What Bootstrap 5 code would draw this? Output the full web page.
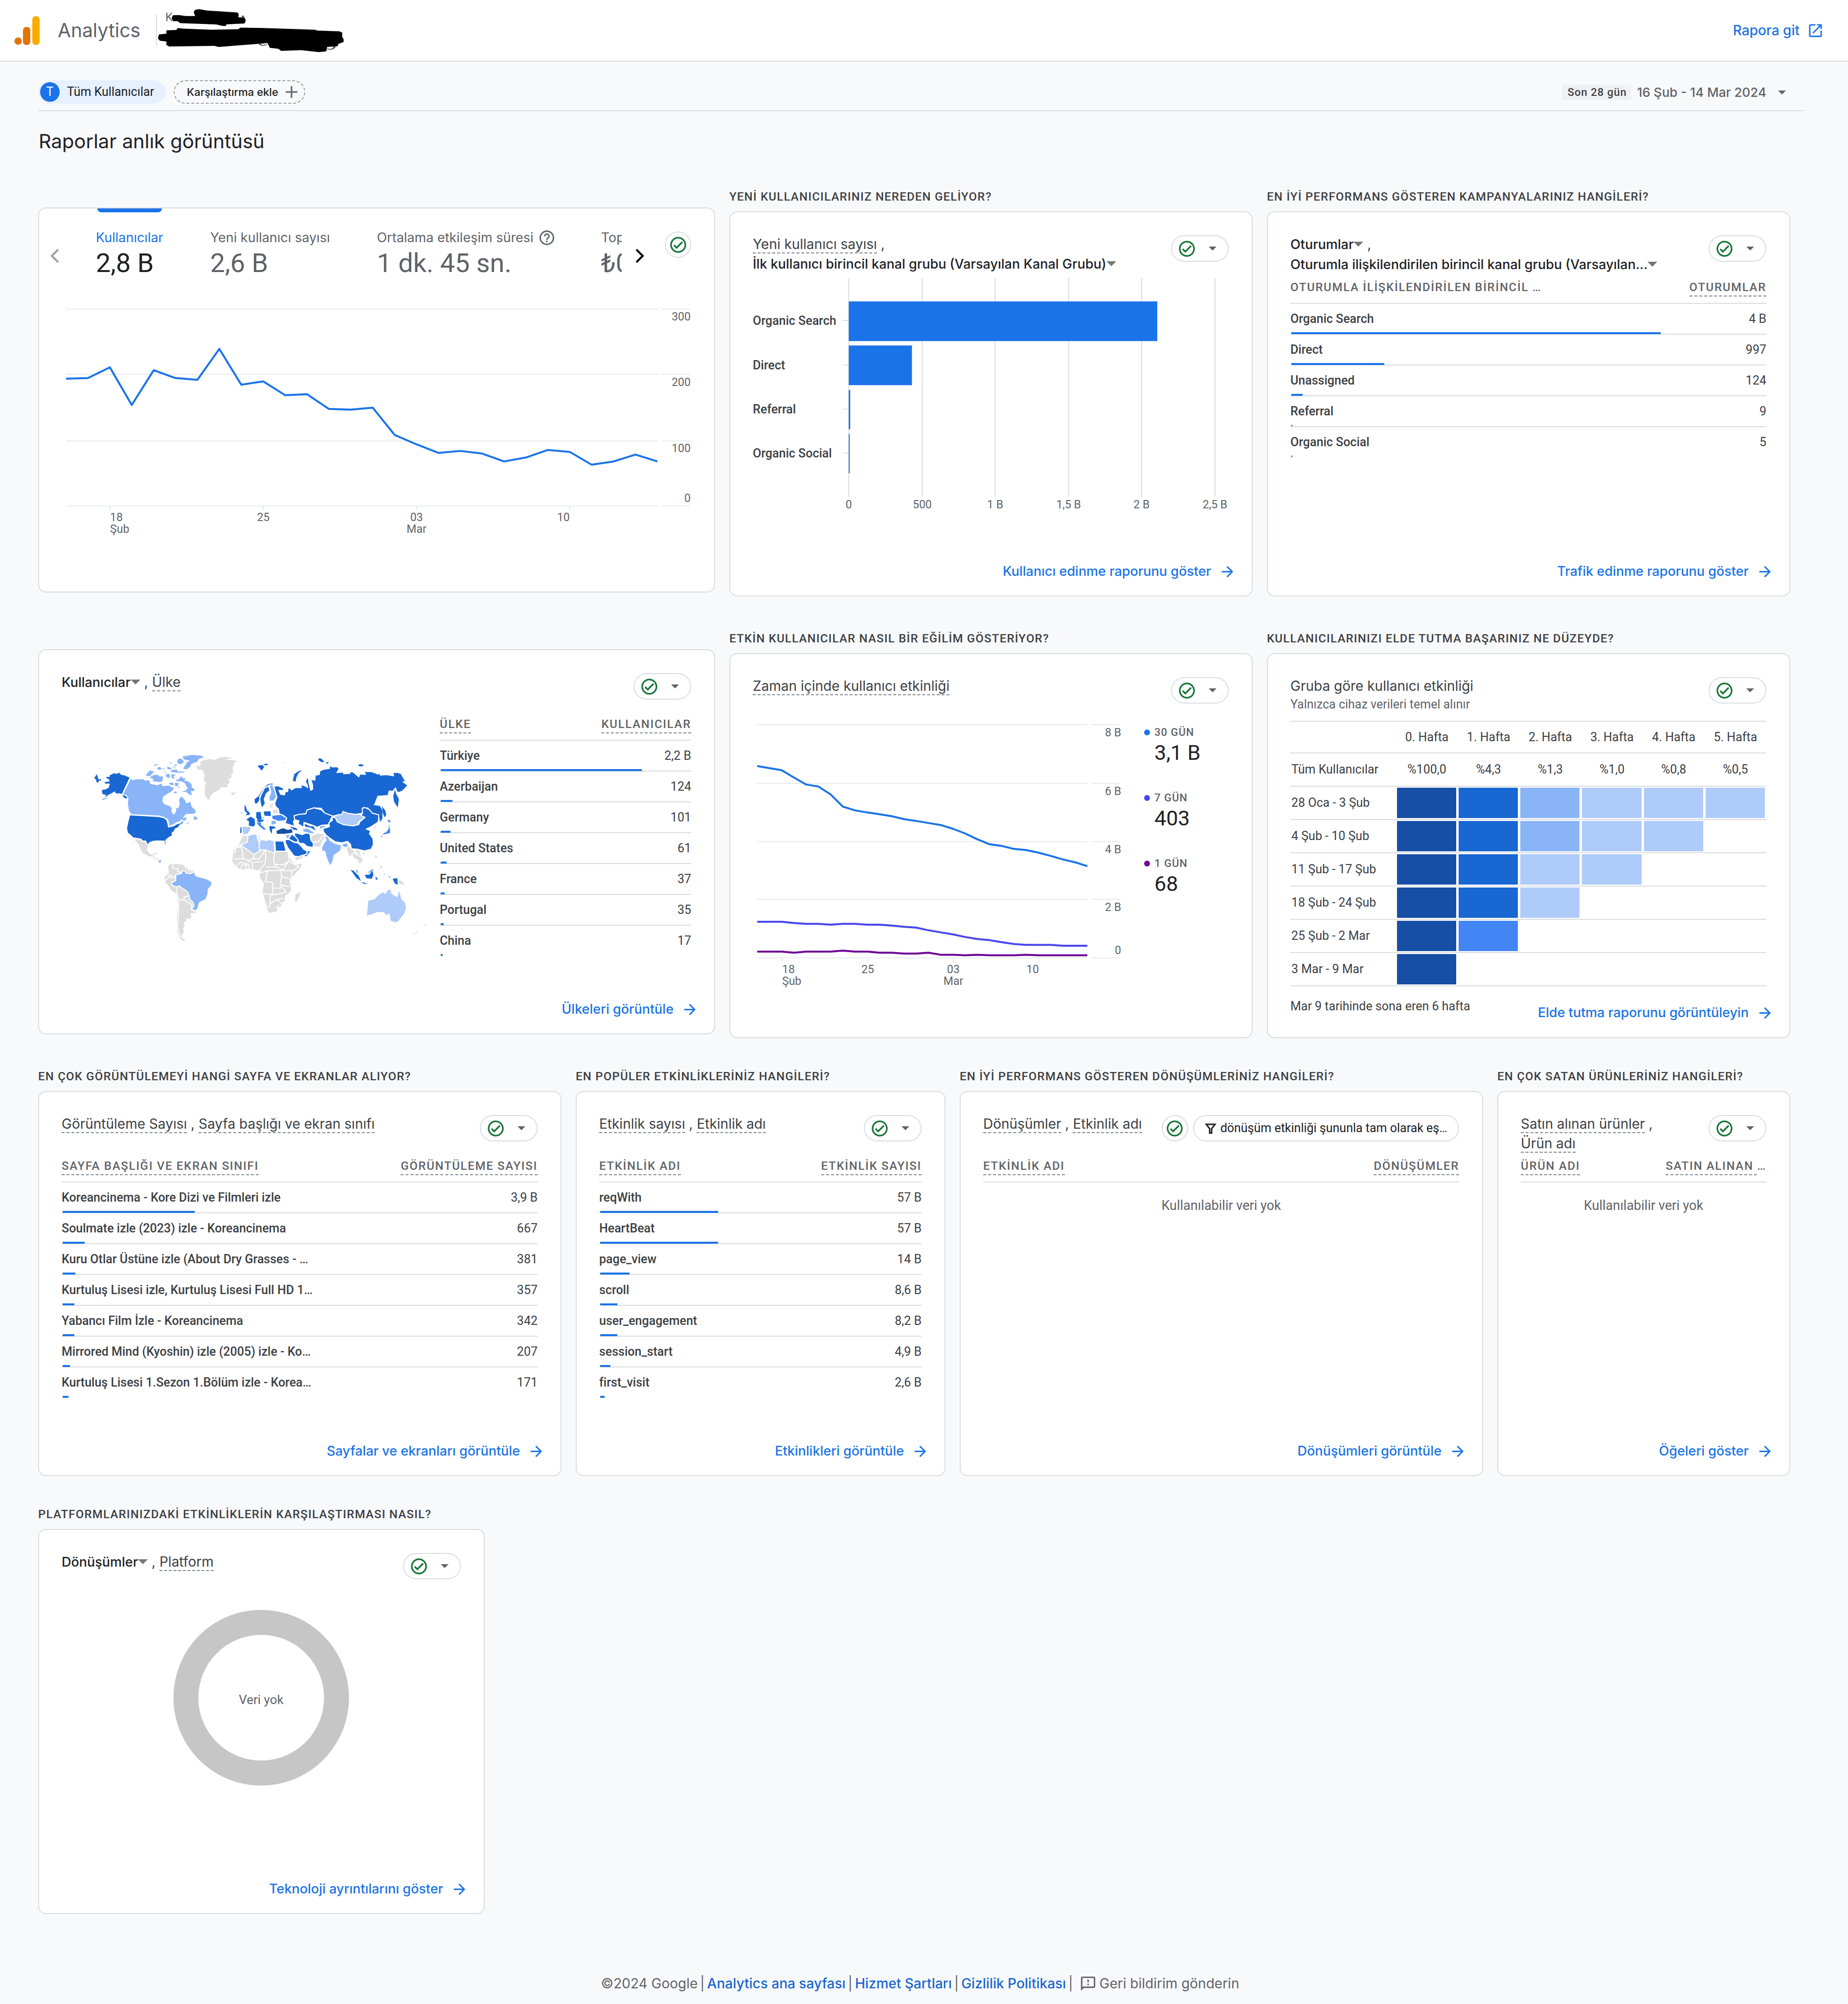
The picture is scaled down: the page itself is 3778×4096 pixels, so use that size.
<!DOCTYPE html>
<html lang="tr">
<head>
<meta charset="utf-8">
<meta name="viewport" content="width=device-width, initial-scale=1">
<title>Analytics | Raporlar anlık görüntüsü</title>
<link href="https://cdn.jsdelivr.net/npm/bootstrap@5.3.0/dist/css/bootstrap.min.css" rel="stylesheet">
<style>
:root{--ink:#202124;--ink2:#3c4043;--muted:#5f6368;--line:#dadce0;--brand:#1a73e8;--ok:#137333}
body{background:#f8f9fb;color:var(--ink2);font-family:Roboto,"Liberation Sans",sans-serif;font-size:25px;line-height:30px}
.gs{font-family:Inter,"Liberation Sans",sans-serif}
a{text-decoration:none;color:var(--brand)}
svg{display:block;flex:none}
.ic{width:39px;height:39px;fill:currentColor}
.ic-sm{width:35px;height:35px;fill:currentColor}
.caret{width:16px;height:8px;fill:var(--muted)}

.topbar{background:#fff;border-bottom:2px solid var(--line);height:126px;padding:0 49px 0 28px}
.topbar .product{font-size:39px;line-height:48px;color:var(--muted);margin-left:36px}
.topbar .rule{width:2px;height:64px;background:var(--line);margin-left:32px}
.topbar .open{font-size:28px;font-weight:500;gap:15px}

.filters{margin:0 91px 0 79px;padding:38px 0 13px;border-bottom:2px solid var(--line)}
.pill{height:48px;border-radius:24px;border:0;color:var(--ink);font-size:25px;line-height:30px;padding:0}
.pill-all{background:#e6f0ff;padding:0 24px 0 3px;gap:15px}
.pill-all .mono{width:40px;height:40px;border-radius:50%;background:var(--brand);color:#fff}
.pill-add{border:2px dashed #9aa0a6;background:none;padding:0 14px 0 25px;gap:15px;font-size:22px;font-weight:500}
.range{border:0;background:none;color:var(--muted);font-size:26px;font-weight:500;padding:2px 36px 0 0}
.range .span-tag{font-family:Roboto,sans-serif;background:#f0f1f3;color:var(--ink2);font-size:22px;line-height:32px;letter-spacing:1px;padding:0 9px 0 12px;margin-right:12px}
.page-title{font-size:40px;line-height:48px;font-weight:400;color:var(--ink);margin:38px 0 74px 79px}

.board{display:grid;grid-template-columns:repeat(23,1fr);column-gap:29px;row-gap:0;padding:0 118px 0 78px;margin-bottom:63px;align-items:start}
.u4{grid-column:span 4}.u5{grid-column:span 5}.u6{grid-column:span 6}.u7{grid-column:span 7}.u9{grid-column:span 9}
.q{font-size:24px;line-height:30px;font-weight:500;letter-spacing:.05em;color:var(--ink2);margin:0 0 15px;white-space:nowrap}
.no-q{padding-top:37px}
.tile{border:2px solid var(--line);border-radius:16px;min-height:787px;padding:45px 47px 29px 46px;color:var(--ink2)}
.tile-head{min-height:80px}
.tile-title{font-size:28px;line-height:40px;font-weight:400;margin:0;color:var(--ink2)}
.tile-title span{white-space:nowrap}
.dash{border-bottom:2px dashed #80868b}
.pick{font-size:27px;font-weight:500;color:var(--ink);white-space:nowrap}
.pick svg{display:inline-block;width:20px;height:10px;fill:#757575;vertical-align:5px}
.chip{height:54px;border:2px solid var(--line);border-radius:27px;background:#fff;padding:0 11px;gap:13px;color:var(--ok);flex:none;margin-top:2px}
.chip-dot{width:54px;padding:0;color:var(--ok)}
.chip .caret{margin:0 12px 0 12px}
.chip-filter{color:var(--ink);font-size:25px;padding:0 22px 0 22px;gap:8px}
.tile-link{font-size:27px;line-height:40px;font-weight:500;gap:16px;margin:auto -15px 0 auto}

.rank{width:100%;margin:0;border-collapse:collapse}
.rank th,.rank td{padding:0;white-space:nowrap}
.rank thead th{height:59px;padding:10px 0 17px;font-size:24px;line-height:30px;font-weight:500;letter-spacing:.07em;color:var(--muted);border-bottom:2px solid var(--line)}
.rank thead .dash{padding-bottom:3px}
.rank tr{position:relative}
.rank tbody tr>*{height:63px;border-bottom:2px solid var(--line)}
.rank tbody tr:last-child>*{border-bottom-color:transparent}
.rank tbody th{font-weight:500}
.rank td,.rank th:last-child{text-align:right}
.rank .fill{position:absolute;left:2px;bottom:0;height:4px;min-width:2px;background:var(--brand)}
.nodata{font-size:27px;line-height:40px;color:var(--muted);text-align:center;padding-top:27px}

.metric-bar{margin:0 0 44px -34px}
.nav-btn{width:40px;height:52px;border:0;background:none;padding:0;margin-top:26px}
.metrics{gap:96px;overflow:hidden;margin:-45px 0 0 64px;padding-top:45px}
.metric{position:relative;border:0;background:none;padding:0;text-align:left;white-space:nowrap;color:var(--muted);flex:none}
.metric .name{font-size:27px;line-height:30px;gap:12px}
.metric .num{font-family:Roboto,sans-serif;font-size:54px;line-height:74px}
.metric.on .name{color:var(--brand)}
.metric.on .num{color:var(--ink)}
.metric.on::before{content:"";position:absolute;left:3px;right:3px;top:-45px;height:8px;background:var(--brand);border-radius:0 0 8px 8px}
.plot text{font-family:Roboto,sans-serif;font-size:23px;fill:var(--muted)}
.plot .cat{font-size:25px;font-weight:500;fill:var(--ink2)}
.plot .g{stroke:#e8eaed;stroke-width:2}
.plot .gv{stroke:var(--line);stroke-width:2}
.plot polyline{fill:none;stroke-width:4;stroke-linejoin:round}
.donut{margin-top:38px}
.plot .hole{font-size:26px}
.legend{gap:60px;padding:20px 0 0;margin-left:40px}
.legend .key{font-size:22px;line-height:30px;font-weight:500;letter-spacing:1px;color:var(--muted);gap:9px}
.legend .key i{width:12px;height:12px;border-radius:50%}
.legend .val{font-size:43px;line-height:44px;padding:4px 0 0 21px;margin-bottom:-4px;color:var(--ink)}
.d30{background:#1a73e8}.d7{background:#4a47eb}.d1{background:#6f0796}

.sub{line-height:35px;color:var(--muted)}
.cohort{table-layout:fixed;width:100%;border-collapse:collapse;margin-top:16px;border-top:2px solid var(--line)}
.cohort th,.cohort td{padding:0;font-weight:400;text-align:center;border-bottom:2px solid var(--line)}
.cohort th:first-child{width:216px;text-align:left;padding-left:2px;white-space:nowrap}
.cohort thead tr{height:65px}
.cohort tbody tr{height:68px}
.cohort .cell{height:62px;margin:2px 3px 2px 2px}
.cohort-foot{margin-top:26px}
.c1{background:#174ea6}.c2{background:#1967d2}.c3{background:#4285f4}.c4{background:#8ab4f8}.c5{background:#aecbfa}

.map-box{padding-top:64px}
.map-list{width:514px}
.map path{stroke:#fff;stroke-width:2;vector-effect:non-scaling-stroke;stroke-linejoin:round}
.map .thin path{stroke-width:0}
.map .edge path{fill:none}
.foot{font-size:28px;line-height:36px;color:var(--muted);padding:61px 16px 22px 0;gap:5px}
.foot a{color:#1967d2;font-weight:500}
.foot a.fb{color:var(--muted);font-weight:400;gap:6px}
</style>
<script src="https://cdn.jsdelivr.net/npm/bootstrap@5.3.0/dist/js/bootstrap.bundle.min.js"></script>
</head>
<body>
<svg width="0" height="0" class="position-absolute" aria-hidden="true">
  <symbol id="check" viewBox="0 0 24 24"><path d="M12 2C6.480 2 2 6.480 2 12s4.480 10 10 10 10-4.480 10-10S17.520 2 12 2zm0 18c-4.410 0-8-3.590-8-8s3.590-8 8-8 8 3.590 8 8-3.590 8-8 8zm4.590-12.420L10 14.170l-2.590-2.580L6 13l4 4 8-8z"/></symbol>
  <symbol id="down" viewBox="0 0 10 5" preserveAspectRatio="none"><path d="M0 0h10L5 5z"/></symbol>
  <symbol id="arrow" viewBox="0 0 24 24"><path d="M12 4l-1.410 1.410L16.170 11H4v2h12.170l-5.580 5.590L12 20l8-8z"/></symbol>
</svg>

<header class="topbar d-flex align-items-center">
  <svg width="54" height="60" viewBox="0 0 54 60" aria-hidden="true"><circle cx="9" cy="52" r="7.500" fill="#e37400"/><rect x="19" y="23" width="15" height="37" rx="7" fill="#e37400"/><rect x="38" y="1" width="15" height="59" rx="7" fill="#f9ab00"/></svg>
  <span class="product gs">Analytics</span>
  <span class="rule"></span>
  <svg width="389" height="92" viewBox="0 0 389 92" role="img" aria-label="Gizlenmiş hesap adı">
    <text x="17" y="27" font-size="24" fill="#5f6368">K</text>
    <g transform="scale(.9609 .4004) translate(-334 -40)">
      <path d="M552 224q4 12 16 4M712 236q-2 20-16 14M516 80l2 14" fill="none" stroke="#5f6368" stroke-width="5"/>
      <path d="M412 62L415 50 424 47 440 54 505 64 508 72 507 88 520 90 523 104 520 120 482 124 480 133 472 132 460 125 383 118 378 108 368 108 365 92 368 78 380 77 395 82 415 82Z"/>
      <path d="M354 155L375 153 378 143 390 146 450 152 506 149 512 141 560 143 670 152 675 156 722 160 728 166 728 188 731 200 731 214 720 224 718 236 696 240 694 262 678 266 640 256 598 260 592 249 574 244 569 220 465 240 456 234 360 237 354 230 354 212 340 208 336 196 338 176 354 172Z"/>
    </g>
  </svg>
  <a href="#" class="open gs d-flex align-items-center ms-auto">Rapora git
    <svg class="ic-sm" viewBox="0 0 24 24"><path d="M19 19H5V5h7V3H5a2 2 0 0 0-2 2v14a2 2 0 0 0 2 2h14c1.100 0 2-.9 2-2v-7h-2v7zM14 3v2h3.590l-9.830 9.830 1.410 1.410L19 6.410V10h2V3h-7z"/></svg></a>
</header>

<main>
<div class="filters d-flex align-items-center">
  <button class="pill pill-all d-flex align-items-center"><span class="mono d-flex align-items-center justify-content-center">T</span>Tüm Kullanıcılar</button>
  <button class="pill pill-add gs d-flex align-items-center ms-3">Karşılaştırma ekle<svg width="24" height="24" viewBox="0 0 24 24" fill="none" stroke="#5f6368" stroke-width="3"><path d="M12 0v24M0 12h24"/></svg></button>
  <button class="range gs d-flex align-items-center ms-auto"><span class="span-tag">Son 28 gün</span>16 Şub - 14 Mar 2024<svg class="caret ms-4"><use href="#down"/></svg></button>
</div>
<h1 class="page-title gs">Raporlar anlık görüntüsü</h1>

<div class="board mb-0 pb-0">
  <section class="u9 no-q">
    <div class="card tile">
      <div class="metric-bar d-flex">
        <button class="nav-btn" aria-label="Önceki"><svg width="40" height="52" viewBox="0 0 40 52" fill="none" stroke="#9aa0a6" stroke-width="4"><path d="M27 13L14 26l13 13"/></svg></button>
        <div class="metrics gs d-flex flex-grow-1">
          <button class="metric on"><span class="name d-flex">Kullanıcılar</span><span class="num d-block">2,8 B</span></button>
          <button class="metric"><span class="name d-flex">Yeni kullanıcı sayısı</span><span class="num d-block">2,6 B</span></button>
          <button class="metric"><span class="name d-flex align-items-center">Ortalama etkileşim süresi<svg width="30" height="30" viewBox="2 2 20 20" fill="#5f6368"><path d="M11 18h2v-2h-2v2zm1-16a10 10 0 1 0 0 20 10 10 0 0 0 0-20zm0 18a8 8 0 1 1 0-16 8 8 0 0 1 0 16zm0-14a4 4 0 0 0-4 4h2a2 2 0 1 1 4 0c0 2-3 1.750-3 5h2c0-2.250 3-2.500 3-5a4 4 0 0 0-4-4z"/></svg></span><span class="num d-block">1 dk. 45 sn.</span></button>
          <button class="metric"><span class="name d-flex">Toplam gelir</span><span class="num d-block">₺0,00</span></button>
        </div>
        <button class="nav-btn ms-3 me-4" aria-label="Sonraki"><svg width="40" height="52" viewBox="0 0 40 52" fill="none" stroke="#000" stroke-width="4"><path d="M14 13l13 13-13 13"/></svg></button>
        <button class="chip chip-dot d-flex align-items-center justify-content-center ms-2" aria-label="Veri kalitesi"><svg class="ic"><use href="#check"/></svg></button>
      </div>
      <svg class="plot" id="users" width="100%" viewBox="0 0 1286 490">
        <path class="g" d="M9 13H1217M1225 13H1284M9 146H1217M1225 146H1284M9 282H1217M1225 282H1284M9 415H1217M1225 415H1284M99 415v10M412 415v10M725 415v10M1038 415v10"/>
        <g text-anchor="end"><text x="1285" y="36">300</text><text x="1285" y="170">200</text><text x="1285" y="305">100</text><text x="1285" y="407">0</text><text x="1038" y="446">10</text></g>
        <text x="99" y="446">18</text><text x="99" y="470">Şub</text>
        <g text-anchor="middle"><text x="412" y="446">25</text><text x="725" y="446">03</text><text x="725" y="470">Mar</text></g>
      </svg>
    </div>
  </section>

  <section class="u7">
    <h2 class="q">YENİ KULLANICILARINIZ NEREDEN GELİYOR?</h2>
    <div class="card tile">
      <div class="tile-head d-flex justify-content-between align-items-start">
        <h3 class="tile-title gs"><span class="dash">Yeni kullanıcı sayısı</span> , <span class="pick">İlk kullanıcı birincil kanal grubu (Varsayılan Kanal Grubu)<svg><use href="#down"/></svg></span></h3>
        <button class="chip d-flex align-items-center" aria-label="Veri kalitesi"><svg class="ic"><use href="#check"/></svg><svg class="caret"><use href="#down"/></svg></button>
      </div>
      <svg class="plot" width="100%" viewBox="0 0 972 490">
        <path class="gv" d="M196 8V455M346 8V455M495 8V455M645 8V455M794 8V455M944 8V455M184 95h12M184 186h12M184 276h12M184 366h12"/>
        <g fill="#1a73e8"><rect x="196" y="56" width="630" height="81"/><rect x="196" y="146" width="129" height="81"/><rect x="196" y="237" width="3" height="80"/><rect x="196" y="327" width="2" height="80"/></g>
        <text class="cat" x="0" y="104">Organic Search</text><text class="cat" x="0" y="195">Direct</text><text class="cat" x="0" y="285">Referral</text><text class="cat" x="0" y="375">Organic Social</text>
        <g text-anchor="middle"><text x="196" y="479">0</text><text x="346" y="479">500</text><text x="495" y="479">1 B</text><text x="645" y="479">1,5 B</text><text x="794" y="479">2 B</text><text x="944" y="479">2,5 B</text></g>
      </svg>
      <a href="#" class="tile-link gs d-flex align-items-center">Kullanıcı edinme raporunu göster<svg class="ic-sm"><use href="#arrow"/></svg></a>
    </div>
  </section>

  <section class="u7">
    <h2 class="q">EN İYİ PERFORMANS GÖSTEREN KAMPANYALARINIZ HANGİLERİ?</h2>
    <div class="card tile">
      <div class="tile-head d-flex justify-content-between align-items-start">
        <h3 class="tile-title gs"><span class="pick">Oturumlar<svg><use href="#down"/></svg></span> ,<br><span class="pick">Oturumla ilişkilendirilen birincil kanal grubu (Varsayılan...<svg><use href="#down"/></svg></span></h3>
        <button class="chip d-flex align-items-center" aria-label="Veri kalitesi"><svg class="ic"><use href="#check"/></svg><svg class="caret"><use href="#down"/></svg></button>
      </div>
      <table class="rank">
        <thead><tr><th>OTURUMLA İLİŞKİLENDİRİLEN BİRİNCİL …</th><th><span class="dash">OTURUMLAR</span></th></tr></thead>
        <tbody>
          <tr><th>Organic Search<i class="fill" style="width:77.6%"></i></th><td>4 B</td></tr>
          <tr><th>Direct<i class="fill" style="width:19.5%"></i></th><td>997</td></tr>
          <tr><th>Unassigned<i class="fill" style="width:2.4%"></i></th><td>124</td></tr>
          <tr><th>Referral<i class="fill" style="width:.2%"></i></th><td>9</td></tr>
          <tr><th>Organic Social<i class="fill" style="width:.2%"></i></th><td>5</td></tr>
        </tbody>
      </table>
      <a href="#" class="tile-link gs d-flex align-items-center">Trafik edinme raporunu göster<svg class="ic-sm"><use href="#arrow"/></svg></a>
    </div>
  </section>
</div>

<div class="board" style="margin-top:71px">
  <section class="u9 no-q">
    <div class="card tile">
      <div class="tile-head d-flex justify-content-between align-items-start">
        <h3 class="tile-title gs"><span class="pick">Kullanıcılar<svg><use href="#down"/></svg></span> , <span class="dash">Ülke</span></h3>
        <button class="chip d-flex align-items-center" aria-label="Veri kalitesi"><svg class="ic"><use href="#check"/></svg><svg class="caret"><use href="#down"/></svg></button>
      </div>
      <div class="row g-0 flex-nowrap">
        <div class="col ps-5 map-box">
          <svg class="map" width="722" height="452" viewBox="0 0 1568 1568" preserveAspectRatio="none" role="img" aria-label="Ülkelere göre kullanıcılar">
            <g fill="#ddd">
              <path d="M488 165L508 160 512 148 505 135 530 118 555 112 575 120 585 112 600 100 625 97 650 103 655 113 630 118 665 122 685 130 665 142 662 165 657 180 660 198 657 215 650 235 655 248 640 260 645 285 632 300 636 318 605 320 595 338 572 355 558 380 552 412 540 400 530 370 527 345 532 320 527 300 538 290 530 280 525 262 528 235 523 205 515 195 486 195 498 185Z"/>
              <path d="M638 350L650 353 668 346 672 360 655 376 642 368 648 360Z"/>
              <path d="M216 680L246 684 255 698 268 700 280 730 276 760 288 785 300 790 312 777 325 774 318 790 305 800 290 812 275 802 255 785 243 755 236 725 222 700Z"/>
              <path d="M203 676L213 705 222 738 212 724 205 700Z"/>
              <path d="M295 808L306 800 312 815 330 820 342 822 322 832 308 826Z"/>
              <path d="M365 875L378 858 400 855 438 862 444 880 455 892 482 902 490 930 560 985 545 1060 540 1105 510 1130 500 1185 490 1212 470 1212 474 1230 470 1250 450 1252 452 1270 440 1275 444 1300 436 1320 442 1345 432 1360 440 1385 448 1416 430 1405 415 1380 408 1340 405 1250 410 1150 406 1075 385 1055 370 1020 352 985 350 960 355 935 370 920 368 900Z"/>
              <path d="M700 655L722 655 765 648 775 655 778 690 800 690 815 690 840 695 885 700 893 770 902 775 915 830 935 862 965 852 958 890 935 930 920 955 910 985 916 1020 914 1060 890 1085 888 1120 875 1140 868 1170 850 1200 815 1212 806 1175 795 1110 785 1060 792 1000 775 960 772 930 778 908 765 905 745 905 730 895 715 900 690 902 668 880 650 840 655 800 655 765 680 730 685 705Z"/>
              <path d="M960 1042L956 1080 940 1134 930 1130 932 1070 946 1065Z"/>
              <path d="M930 812L970 797 968 815 935 840Z"/>
              <path d="M1003 660L1030 640 1065 645 1070 665 1050 710 1045 740 1015 738 1012 715 1002 700Z"/>
              <path d="M1158 745L1168 718 1182 752 1195 765 1218 758 1222 790 1235 820 1232 850 1215 862 1210 832 1195 825 1185 795 1175 812 1165 780Z"/>
              <path d="M1090 698L1130 716 1128 728 1092 712ZM1134 735L1146 738 1144 765 1136 755ZM1104 872L1110 880 1106 890Z"/>
              <path d="M1282 590L1292 578 1290 612 1302 628 1300 648 1292 622 1280 608Z"/>
              <path d="M1392 968L1410 980 1424 1022 1406 1005 1392 1006Z"/>
              <path d="M1508 1278L1516 1290 1500 1316 1486 1330 1475 1348 1455 1370 1449 1362 1480 1328 1500 1306Z"/>
              <path d="M832 475L855 468 860 502 832 505ZM822 428L840 430 838 462 818 464ZM798 550L820 544 816 562 802 560Z"/>
            </g>
            <g fill="#8ab4f8">
              <path d="M203 248L210 262 232 254 240 258 256 254 268 265 285 262 292 290 322 298 340 284 345 304 372 300 385 312 398 316 388 345 362 370 348 385 345 412 352 432 378 448 386 462 386 490 393 506 401 490 402 464 414 458 418 430 414 408 422 380 436 384 440 398 446 408 450 426 462 420 466 412 472 430 474 450 486 468 494 486 492 500 478 508 450 508 437 530 454 524 450 548 438 562 430 546 420 560 405 568 392 582 370 596 372 576 366 545 350 530 328 520 205 510 192 480 188 430 190 395 184 376 166 368Z"/>
              <path d="M403 935L418 932 430 925 428 912 445 908 447 925 470 928 485 916 492 945 518 955 545 968 562 985 562 1010 547 1040 545 1075 536 1112 508 1132 502 1170 490 1196 472 1175 484 1158 478 1130 465 1110 460 1070 448 1048 430 1032 420 1015 405 1022 388 1012 384 992 402 978Z"/>
              <path d="M1062 660L1080 665 1085 690 1110 715 1138 725 1152 712 1165 710 1168 735 1155 745 1138 730 1134 765 1105 800 1100 840 1090 874 1080 850 1068 800 1065 770 1052 772 1050 745 1060 710 1070 690Z"/>
              <path d="M818 305L832 295 845 350 850 385 838 412 820 416 815 390 825 350Z"/>
              <path d="M890 652L912 650 905 672 895 685ZM965 612L985 604 1015 632 1020 648 1000 645 968 632ZM1040 588L1080 586 1060 605 1040 614ZM825 552L845 548 852 576 826 586ZM780 520L803 528 790 542Z"/>
            </g>
            <g class="thin" fill="#8ab4f8">
              <path d="M433 97L475 87 515 92 528 102 505 115 498 134 470 152 468 168 450 190 436 184 442 165 450 150 448 142 465 128 438 118Z"/>
              <path d="M412 118L422 110 434 122 438 140 428 152 414 150 408 138Z"/>
              <path d="M270 228L288 196 308 206 300 215 290 235 275 238ZM285 248L305 228 325 228 330 240 345 238 345 262 340 278 310 276 298 268 305 258Z"/>
              <path d="M385 194L408 190 410 204 440 205 440 212 410 213 378 206ZM302 166L310 154 325 150 318 160ZM318 182L330 170 342 186 330 193ZM364 170L380 176 385 190 366 188ZM345 180L352 178 350 192ZM374 135L385 142 382 150ZM392 158L408 152 404 164ZM388 168L402 170 398 178Z"/>
              <path d="M360 222L376 222 376 245 370 252 358 238ZM383 222L402 226 392 240 400 256 384 250ZM350 210L360 206 355 216ZM372 286L388 282 396 300 380 300Z"/>
              <path d="M402 258L412 264 428 236 432 250 446 252 440 268 458 276 472 292 474 316 488 336 478 344 470 340 474 372 462 368 448 348 426 350 444 340 456 325 448 304 440 282 420 272 408 275ZM398 284L416 286 412 306 400 310ZM392 350L404 345 408 360 398 358ZM412 312L420 310 414 325Z"/>
              <path d="M480 545L486 518 498 532 498 546ZM444 576L458 566 468 558 456 574ZM324 840L338 828 334 854ZM1290 795L1295 818 1289 812ZM1312 872L1318 880 1314 892ZM1202 898L1210 904 1213 924 1206 920ZM1254 920L1276 894 1280 906 1266 922Z"/>
            </g>
            <g fill="#1967d2">
              <path d="M200 246L164 368 150 362 138 366 131 350 118 362 105 372 92 390 86 383 92 374 76 368 72 345 76 330 90 328 102 318 108 294 86 292 84 276 106 272 104 262 88 248 96 238 107 239 106 230 130 212 138 218 153 209 160 224 178 230Z"/>
              <path d="M198 512L328 524 350 532 362 545 368 575 370 598 392 590 408 575 425 568 430 552 437 560 433 575 420 585 415 600 400 612 395 630 386 640 388 658 370 675 358 692 360 740 352 715 352 698 340 697 320 696 300 700 285 710 280 730 268 697 255 697 248 684 212 674 200 655 188 640 184 608 190 560Z"/>
              <path d="M838 308L858 306 880 322 882 338 860 338 868 365 885 370 888 350 900 345 900 325 912 320 915 335 935 318 960 318 958 298 975 305 988 318 985 295 978 278 985 248 992 255 994 290 1002 338 1010 330 1010 300 1002 260 1020 265 1022 232 1040 225 1042 200 1060 188 1085 182 1085 160 1098 172 1120 170 1128 185 1118 212 1145 208 1148 220 1175 218 1178 205 1190 208 1215 242 1220 222 1245 225 1238 205 1272 205 1300 222 1315 215 1310 230 1340 226 1370 235 1366 212 1385 210 1402 218 1423 275 1412 278 1433 302 1410 342 1395 352 1385 350 1378 320 1366 345 1350 342 1345 375 1300 380 1285 440 1310 445 1322 480 1322 540 1308 570 1302 512 1275 500 1255 464 1234 460 1230 500 1200 508 1165 500 1145 488 1140 508 1100 520 1065 500 1048 465 1015 462 985 478 980 503 950 508 928 518 930 545 925 560 930 592 905 580 888 572 895 535 880 515 862 505 858 470 845 450 842 430 852 385 845 350Z"/>
              <path d="M928 518L950 508 980 505 985 478 1015 462 1048 475 1065 500 1098 520 1090 545 1080 582 1050 585 1030 600 1010 585 972 565 970 600 945 575 950 555 930 545Z"/>
              <path d="M972 568L1000 590 1015 590 1030 632 1000 605 975 598Z"/>
              <path d="M1055 610L1085 595 1082 570 1098 550 1096 530 1110 530 1120 560 1145 580 1190 590 1215 580 1220 560 1243 530 1222 515 1232 500 1230 468 1242 460 1262 475 1275 500 1304 512 1302 560 1285 580 1265 600 1248 612 1268 626 1262 645 1278 680 1280 720 1270 755 1240 767 1210 755 1182 752 1178 720 1165 700 1140 710 1110 702 1085 675 1070 655 1060 635Z"/>
              <path d="M750 400L770 375 790 320 810 292 830 285 842 298 820 300 797 320 780 375 772 420 760 438 752 430ZM795 322L815 308 820 340 805 360 795 400 800 430 785 467 778 430 775 385Z"/>
              <path d="M712 545L735 520 755 540 757 580 750 598 725 592 725 560ZM758 490L780 486 787 545 768 556 757 530ZM790 485L825 482 827 525 795 520Z"/>
              <path d="M843 696L882 698 892 769 845 769ZM888 688L905 686 925 705 945 712 960 735 970 755 985 768 985 790 960 800 948 808 928 804 912 770 900 745 890 712ZM918 648L930 662 944 685 944 706 930 704 903 682 910 665ZM930 638L950 645 965 652 980 640 998 645 1002 690 1014 715 1012 742 985 735 970 715 950 712 944 685 930 660Z"/>
            </g>
            <g class="thin" fill="#1967d2">
              <path d="M52 223L60 262 70 256 70 268 62 270 55 286 48 270 50 262 40 252ZM67 180L71 182 68 185ZM164 370L174 374 186 384 184 398 172 388ZM72 406L84 396 106 386 82 402Z"/>
              <path d="M1376 330L1380 360 1393 400 1388 460 1372 420 1368 380ZM965 193L948 215 938 245 934 277 922 270 928 225 945 204ZM1318 450L1332 480 1337 510 1330 530 1322 500Z"/>
              <path d="M766 163L785 158 796 170 790 184 785 199 775 182ZM790 154L806 148 815 154 800 161ZM1035 112L1048 112 1063 135 1050 138 1037 125ZM1070 135L1083 142 1073 150ZM1213 156L1225 152 1238 160 1228 169 1215 166ZM885 140L888 143 885 146Z"/>
              <path d="M708 440L716 460 718 480 730 495 732 510 712 516 720 500 708 482ZM690 597L695 602 694 642 688 638ZM760 552L795 545 788 560 768 562ZM818 590L840 595 848 604 830 612 830 648 820 622ZM910 594L938 606 944 622 920 614Z"/>
              <path d="M1179 902L1192 908 1215 945 1225 982 1205 960ZM1242 937L1262 935 1276 908 1280 938 1272 965 1248 960ZM1225 988L1240 992 1256 1002 1238 1000ZM1366 964L1386 960 1388 1006 1376 1000 1368 975ZM1290 948L1300 968 1290 972ZM1348 946L1356 952 1350 956ZM1328 930L1332 935 1328 936ZM1234 782L1238 786 1236 792Z"/>
            </g>
            <path fill="#174ea6" d="M847 625L865 610 880 603 900 615 918 608 924 640 905 645 880 650 850 650Z"/>
            <g fill="#4285f4"><path d="M828 515L870 508 895 535 890 552 860 558 830 542Z"/><path d="M985 765L1002 765 998 782 985 808 974 808 972 795 985 790Z"/></g>
            <g class="thin" fill="#4285f4"><path d="M762 568L780 562 780 580 802 612 795 618 772 590ZM1343 545L1358 555 1348 568ZM1348 576L1354 620 1354 640 1335 648 1318 652 1340 630 1348 610ZM1313 658L1320 664 1318 674Z"/></g>
            <g fill="#aecbfa">
              <path d="M1255 1118L1285 1105 1300 1080 1320 1056 1333 1068 1345 1040 1362 1042 1358 1065 1385 1092 1393 1036 1402 1080 1405 1105 1422 1135 1427 1170 1420 1210 1405 1240 1390 1270 1375 1277 1355 1265 1350 1215 1338 1227 1325 1205 1295 1205 1270 1222 1248 1230 1252 1180Z"/>
              <path d="M1102 522L1125 510 1140 508 1145 488 1165 500 1200 508 1228 505 1224 515 1243 530 1215 560 1210 582 1188 590 1145 580 1120 562 1112 535Z"/>
              <path d="M722 660L740 650 763 648 765 680 772 700 775 768 750 792 690 725 715 708 722 690ZM778 686L805 694 815 686 838 694 842 784 800 760 778 762 772 740Z"/>
              <path d="M694 592L738 596 732 625 722 650 700 652 697 610ZM690 490L702 484 700 500 690 506ZM1366 1300L1377 1302 1368 1324ZM828 442L840 448 840 460Z"/>
            </g>
            <g class="edge">
              <path d="M390 860L388 890 412 895 412 915 430 925M355 938L375 936 398 958 402 935M352 980L375 950 384 965M407 1022L408 1080 414 1110 415 1200 411 1300 420 1370 440 1392M412 1112L440 1115 440 1090 460 1088M440 1115L474 1150 472 1180 490 1200M458 885L462 915M474 898L474 925"/>
              <path d="M655 778L668 778 668 742 690 742 690 725M695 740L702 822 658 825M702 822L722 835 748 822 750 792M748 822L772 825 800 762M800 762L802 820 798 860 780 890 778 910M842 784L836 830 842 862 880 866 905 840 902 775M842 862L848 880 880 905M802 880L850 880M745 905L742 850 722 838M742 850L790 842M730 895L726 860 695 870 690 900M714 862L714 900M668 880L690 848 720 858M772 925L810 908 868 906 872 950 866 1010 910 1022M810 908L800 985 832 990 832 1030 866 1032 882 1005M785 1070L850 1076 890 1060M850 1076L822 1080 820 1165 808 1165M822 1140L850 1112 880 1105M850 1112L872 1140M832 1030L832 1070M868 906L920 908 915 960M872 948L912 968M880 905L890 870 905 840 950 880 920 908M893 770H843M880 1030L892 1062M680 735L725 700M767 650L770 700"/>
              <path d="M858 1158L862 1170 855 1180 850 1170ZM1015 705L1035 700 1062 650M1182 785L1205 780 1215 800 1232 820M1195 765L1205 800M828 460L815 470"/>
            </g>
          </svg>
        </div>
        <div class="col-auto map-list">
          <table class="rank">
            <thead><tr><th><span class="dash">ÜLKE</span></th><th><span class="dash">KULLANICILAR</span></th></tr></thead>
            <tbody>
              <tr><th>Türkiye<i class="fill" style="width:80%"></i></th><td>2,2 B</td></tr>
              <tr><th>Azerbaijan<i class="fill" style="width:4.7%"></i></th><td>124</td></tr>
              <tr><th>Germany<i class="fill" style="width:3.9%"></i></th><td>101</td></tr>
              <tr><th>United States<i class="fill" style="width:2.3%"></i></th><td>61</td></tr>
              <tr><th>France<i class="fill" style="width:1.6%"></i></th><td>37</td></tr>
              <tr><th>Portugal<i class="fill" style="width:1.2%"></i></th><td>35</td></tr>
              <tr><th>China<i class="fill" style="width:.8%"></i></th><td>17</td></tr>
            </tbody>
          </table>
        </div>
      </div>
      <a href="#" class="tile-link gs d-flex align-items-center">Ülkeleri görüntüle<svg class="ic-sm"><use href="#arrow"/></svg></a>
    </div>
  </section>

  <section class="u7">
    <h2 class="q">ETKİN KULLANICILAR NASIL BİR EĞİLİM GÖSTERİYOR?</h2>
    <div class="card tile">
      <div class="tile-head d-flex justify-content-between align-items-start">
        <h3 class="tile-title gs"><span class="dash">Zaman içinde kullanıcı etkinliği</span></h3>
        <button class="chip d-flex align-items-center" aria-label="Veri kalitesi"><svg class="ic"><use href="#check"/></svg><svg class="caret"><use href="#down"/></svg></button>
      </div>
      <div class="d-flex">
        <svg class="plot" id="trend" width="760" height="560" viewBox="0 0 760 560">
          <path class="g" d="M9 19H684M692 19H751M9 139H684M692 139H751M9 258H684M692 258H751M9 376H684M692 376H751M9 496H684M692 496H751M60 496v10M235 496v10M410 496v10M585 496v10"/>
          <g text-anchor="end"><text x="753" y="43">8 B</text><text x="753" y="163">6 B</text><text x="753" y="282">4 B</text><text x="753" y="400">2 B</text><text x="753" y="488">0</text><text x="585" y="527">10</text></g>
          <text x="60" y="527">18</text><text x="60" y="551">Şub</text>
          <g text-anchor="middle"><text x="235" y="527">25</text><text x="410" y="527">03</text><text x="410" y="551">Mar</text></g>
        </svg>
        <div class="legend d-flex flex-column">
          <div><div class="key d-flex align-items-center"><i class="d30"></i>30 GÜN</div><div class="val">3,1 B</div></div>
          <div><div class="key d-flex align-items-center"><i class="d7"></i>7 GÜN</div><div class="val">403</div></div>
          <div><div class="key d-flex align-items-center"><i class="d1"></i>1 GÜN</div><div class="val">68</div></div>
        </div>
      </div>
    </div>
  </section>

  <section class="u7">
    <h2 class="q">KULLANICILARINIZI ELDE TUTMA BAŞARINIZ NE DÜZEYDE?</h2>
    <div class="card tile">
      <div class="d-flex justify-content-between align-items-start">
        <div>
          <h3 class="tile-title gs">Gruba göre kullanıcı etkinliği</h3>
          <div class="sub">Yalnızca cihaz verileri temel alınır</div>
        </div>
        <button class="chip d-flex align-items-center" aria-label="Veri kalitesi"><svg class="ic"><use href="#check"/></svg><svg class="caret"><use href="#down"/></svg></button>
      </div>
      <table class="cohort">
        <thead><tr><th></th><th>0. Hafta</th><th>1. Hafta</th><th>2. Hafta</th><th>3. Hafta</th><th>4. Hafta</th><th>5. Hafta</th></tr></thead>
        <tbody>
          <tr><th>Tüm Kullanıcılar</th><td>%100,0</td><td>%4,3</td><td>%1,3</td><td>%1,0</td><td>%0,8</td><td>%0,5</td></tr>
          <tr><th>28 Oca - 3 Şub</th><td><div class="cell c1"></div></td><td><div class="cell c2"></div></td><td><div class="cell c4"></div></td><td><div class="cell c5"></div></td><td><div class="cell c5"></div></td><td><div class="cell c5"></div></td></tr>
          <tr><th>4 Şub - 10 Şub</th><td><div class="cell c1"></div></td><td><div class="cell c2"></div></td><td><div class="cell c4"></div></td><td><div class="cell c5"></div></td><td><div class="cell c5"></div></td><td></td></tr>
          <tr><th>11 Şub - 17 Şub</th><td><div class="cell c1"></div></td><td><div class="cell c2"></div></td><td><div class="cell c5"></div></td><td><div class="cell c5"></div></td><td></td><td></td></tr>
          <tr><th>18 Şub - 24 Şub</th><td><div class="cell c1"></div></td><td><div class="cell c2"></div></td><td><div class="cell c5"></div></td><td></td><td></td><td></td></tr>
          <tr><th>25 Şub - 2 Mar</th><td><div class="cell c1"></div></td><td><div class="cell c3"></div></td><td></td><td></td><td></td><td></td></tr>
          <tr><th>3 Mar - 9 Mar</th><td><div class="cell c1"></div></td><td></td><td></td><td></td><td></td><td></td></tr>
        </tbody>
      </table>
      <div class="cohort-foot d-flex justify-content-between align-items-start">
        <span>Mar 9 tarihinde sona eren 6 hafta</span>
        <a href="#" class="tile-link gs d-flex align-items-center mt-2">Elde tutma raporunu görüntüleyin<svg class="ic-sm"><use href="#arrow"/></svg></a>
      </div>
    </div>
  </section>
</div>

<div class="board">
  <section class="u7">
    <h2 class="q">EN ÇOK GÖRÜNTÜLEMEYİ HANGİ SAYFA VE EKRANLAR ALIYOR?</h2>
    <div class="card tile">
      <div class="tile-head d-flex justify-content-between align-items-start">
        <h3 class="tile-title gs"><span class="dash">Görüntüleme Sayısı</span> , <span class="dash">Sayfa başlığı ve ekran sınıfı</span></h3>
        <button class="chip d-flex align-items-center" aria-label="Veri kalitesi"><svg class="ic"><use href="#check"/></svg><svg class="caret"><use href="#down"/></svg></button>
      </div>
      <table class="rank">
        <thead><tr><th><span class="dash">SAYFA BAŞLIĞI VE EKRAN SINIFI</span></th><th><span class="dash">GÖRÜNTÜLEME SAYISI</span></th></tr></thead>
        <tbody>
          <tr><th>Koreancinema - Kore Dizi ve Filmleri izle<i class="fill" style="width:27.7%"></i></th><td>3,9 B</td></tr>
          <tr><th>Soulmate izle (2023) izle - Koreancinema<i class="fill" style="width:4.6%"></i></th><td>667</td></tr>
          <tr><th>Kuru Otlar Üstüne izle (About Dry Grasses - …<i class="fill" style="width:2.7%"></i></th><td>381</td></tr>
          <tr><th>Kurtuluş Lisesi izle, Kurtuluş Lisesi Full HD 1…<i class="fill" style="width:2.5%"></i></th><td>357</td></tr>
          <tr><th>Yabancı Film İzle - Koreancinema<i class="fill" style="width:2.5%"></i></th><td>342</td></tr>
          <tr><th>Mirrored Mind (Kyoshin) izle (2005) izle - Ko…<i class="fill" style="width:1.5%"></i></th><td>207</td></tr>
          <tr><th>Kurtuluş Lisesi 1.Sezon 1.Bölüm izle - Korea…<i class="fill" style="width:1.2%"></i></th><td>171</td></tr>
        </tbody>
      </table>
      <a href="#" class="tile-link gs d-flex align-items-center">Sayfalar ve ekranları görüntüle<svg class="ic-sm"><use href="#arrow"/></svg></a>
    </div>
  </section>

  <section class="u5">
    <h2 class="q">EN POPÜLER ETKİNLİKLERİNİZ HANGİLERİ?</h2>
    <div class="card tile">
      <div class="tile-head d-flex justify-content-between align-items-start">
        <h3 class="tile-title gs"><span class="dash">Etkinlik sayısı</span> , <span class="dash">Etkinlik adı</span></h3>
        <button class="chip d-flex align-items-center" aria-label="Veri kalitesi"><svg class="ic"><use href="#check"/></svg><svg class="caret"><use href="#down"/></svg></button>
      </div>
      <table class="rank">
        <thead><tr><th><span class="dash">ETKİNLİK ADI</span></th><th><span class="dash">ETKİNLİK SAYISI</span></th></tr></thead>
        <tbody>
          <tr><th>reqWith<i class="fill" style="width:36.5%"></i></th><td>57 B</td></tr>
          <tr><th>HeartBeat<i class="fill" style="width:36.5%"></i></th><td>57 B</td></tr>
          <tr><th>page_view<i class="fill" style="width:9.1%"></i></th><td>14 B</td></tr>
          <tr><th>scroll<i class="fill" style="width:5.3%"></i></th><td>8,6 B</td></tr>
          <tr><th>user_engagement<i class="fill" style="width:5.3%"></i></th><td>8,2 B</td></tr>
          <tr><th>session_start<i class="fill" style="width:3.2%"></i></th><td>4,9 B</td></tr>
          <tr><th>first_visit<i class="fill" style="width:1.4%"></i></th><td>2,6 B</td></tr>
        </tbody>
      </table>
      <a href="#" class="tile-link gs d-flex align-items-center">Etkinlikleri görüntüle<svg class="ic-sm"><use href="#arrow"/></svg></a>
    </div>
  </section>

  <section class="u7">
    <h2 class="q">EN İYİ PERFORMANS GÖSTEREN DÖNÜŞÜMLERİNİZ HANGİLERİ?</h2>
    <div class="card tile">
      <div class="tile-head d-flex justify-content-between align-items-start">
        <h3 class="tile-title gs text-nowrap"><span class="dash">Dönüşümler</span> , <span class="dash">Etkinlik adı</span></h3>
        <div class="d-flex" style="gap:10px">
          <button class="chip chip-dot d-flex align-items-center justify-content-center" aria-label="Veri kalitesi"><svg class="ic"><use href="#check"/></svg></button>
          <button class="chip chip-filter d-flex align-items-center"><svg width="24" height="24" viewBox="0 0 24 24" fill="none" stroke="#202124" stroke-width="3"><path d="M3 4h18l-7 9v9h-4v-9z"/></svg>dönüşüm etkinliği şununla tam olarak eş…</button>
        </div>
      </div>
      <table class="rank">
        <thead><tr><th><span class="dash">ETKİNLİK ADI</span></th><th><span class="dash">DÖNÜŞÜMLER</span></th></tr></thead>
      </table>
      <div class="nodata">Kullanılabilir veri yok</div>
      <a href="#" class="tile-link gs d-flex align-items-center">Dönüşümleri görüntüle<svg class="ic-sm"><use href="#arrow"/></svg></a>
    </div>
  </section>

  <section class="u4">
    <h2 class="q">EN ÇOK SATAN ÜRÜNLERİNİZ HANGİLERİ?</h2>
    <div class="card tile">
      <div class="tile-head d-flex justify-content-between align-items-start">
        <h3 class="tile-title gs"><span class="dash">Satın alınan ürünler</span> , <span class="dash">Ürün adı</span></h3>
        <button class="chip d-flex align-items-center" aria-label="Veri kalitesi"><svg class="ic"><use href="#check"/></svg><svg class="caret"><use href="#down"/></svg></button>
      </div>
      <table class="rank">
        <thead><tr><th><span class="dash">ÜRÜN ADI</span></th><th><span class="dash">SATIN ALINAN </span>…</th></tr></thead>
      </table>
      <div class="nodata">Kullanılabilir veri yok</div>
      <a href="#" class="tile-link gs d-flex align-items-center">Öğeleri göster<svg class="ic-sm"><use href="#arrow"/></svg></a>
    </div>
  </section>
</div>

<div class="board">
  <section class="u6">
    <h2 class="q">PLATFORMLARINIZDAKİ ETKİNLİKLERİN KARŞILAŞTIRMASI NASIL?</h2>
    <div class="card tile">
      <div class="tile-head d-flex justify-content-between align-items-start">
        <h3 class="tile-title gs"><span class="pick">Dönüşümler<svg><use href="#down"/></svg></span> , <span class="dash">Platform</span></h3>
        <button class="chip d-flex align-items-center" aria-label="Veri kalitesi"><svg class="ic"><use href="#check"/></svg><svg class="caret"><use href="#down"/></svg></button>
      </div>
      <svg class="plot donut mx-auto" width="360" height="360" viewBox="0 0 360 360"><circle cx="180" cy="180" r="154" fill="none" stroke="#c6c6c6" stroke-width="51"/><text class="hole" x="180" y="193" text-anchor="middle">Veri yok</text></svg>
      <a href="#" class="tile-link gs d-flex align-items-center">Teknoloji ayrıntılarını göster<svg class="ic-sm"><use href="#arrow"/></svg></a>
    </div>
  </section>
</div>
</main>

<footer class="foot gs d-flex justify-content-center align-items-center">
  <span>©2024 Google</span><span>|</span><a href="#">Analytics ana sayfası</a><span>|</span><a href="#">Hizmet Şartları</a><span>|</span><a href="#">Gizlilik Politikası</a><span>|</span>
  <a href="#" class="fb d-flex align-items-center ms-2"><svg class="ic-sm" viewBox="0 0 24 24"><path d="M20 2H4c-1.100 0-2 .9-2 2v18l4-4h14c1.100 0 2-.9 2-2V4c0-1.100-.9-2-2-2zm0 14H5.170L4 17.170V4h16v12zM11 12h2v2h-2zM11 6h2v4h-2z"/></svg>Geri bildirim gönderin</a>
</footer>

<script>
// One line per series, spread evenly over the 28 days of the range
function series(id, values, color, box) {
  const step = (box.right - box.left) / (values.length - 1);
  const line = document.createElementNS('http://www.w3.org/2000/svg', 'polyline');
  line.setAttribute('points', values.map((v, i) =>
    (box.left + i * step).toFixed(1) + ',' + (box.zero - v * box.unit).toFixed(1)).join(' '));
  line.setAttribute('stroke', color);
  document.getElementById(id).appendChild(line);
}
series('users', [194,195,211.5,154,207,195,192.5,239.5,185,190,169,170.5,148,147,150,108.5,94,81,84,80,68,74,85.5,82.5,63,68,78.5,68], '#1a73e8', {left: 9, right: 1217, zero: 415, unit: 1.34});
const trend = {left: 9, right: 684, zero: 496, unit: 59.6};
series('trend', [6.58,6.51,6.44,6.19,5.95,5.88,5.61,5.19,5.06,4.99,4.93,4.86,4.76,4.7,4.63,4.56,4.43,4.27,4.07,3.9,3.84,3.74,3.7,3.61,3.5,3.38,3.28,3.15], '#1a73e8', trend);
series('trend', [1.24,1.24,1.24,1.2,1.17,1.17,1.14,1.17,1.17,1.14,1.14,1.11,1.07,1.04,.95,.88,.81,.72,.65,.61,.54,.48,.45,.45,.45,.42,.42,.42], '#4a47eb', trend);
series('trend', [.22,.22,.22,.18,.22,.22,.22,.25,.22,.22,.18,.18,.15,.15,.18,.11,.11,.09,.11,.09,.09,.09,.11,.09,.09,.09,.09,.09], '#6f0796', trend);
</script>
</body>
</html>
